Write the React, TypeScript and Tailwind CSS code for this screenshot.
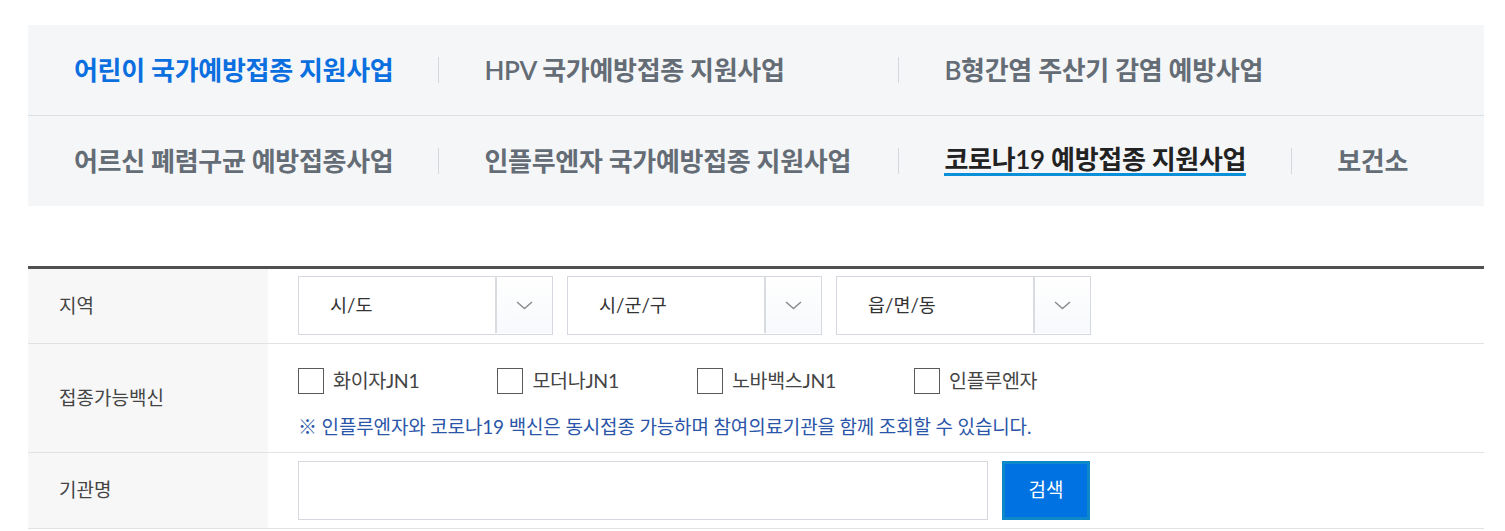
import { useState } from 'react';

const FONT = "font-['Lato','Noto_Sans_CJK_KR',sans-serif]";

function Sep() {
  return <span className="mx-[45px] inline-block h-[26px] w-px bg-[#d3d8de]" />;
}

function Chevron() {
  return (
    <svg width="17" height="9" viewBox="0 0 17 9" fill="none">
      <polyline points="1,1 8.5,7.5 16,1" stroke="#8c8c8c" strokeWidth="1.5" />
    </svg>
  );
}

function SelectBox({ label }: { label: string }) {
  return (
    <div className="flex h-[59px] w-[255px] border border-[#d5d8de] bg-white">
      <div className="flex flex-1 items-center pl-[31px] text-[18.5px] text-[#333]">{label}</div>
      <div className="mb-[1px] flex w-[57px] items-center justify-center border-l-2 border-[#d8dbe0] bg-gradient-to-b from-white to-[#f7f9fc]">
        <Chevron />
      </div>
    </div>
  );
}

function Check({ label }: { label: string }) {
  const [on, setOn] = useState(false);
  return (
    <label className="flex cursor-pointer items-center" onClick={() => setOn(!on)}>
      <span className="flex h-[26px] w-[26px] items-center justify-center border border-[#5a5a5a] bg-white text-[14px] text-[#0b6fe0]">
        {on ? '✓' : ''}
      </span>
      <span className="ml-[9px] text-[19.5px] tracking-[-0.3px] text-[#444]">{label}</span>
    </label>
  );
}

export default function App() {
  return (
    <div className={`${FONT} min-h-[531px] bg-white pt-[25px]`}>
      <div className="ml-[28px] w-[1456px]">
        {/* tab menu */}
        <nav className="bg-[#f5f6f8] text-[26px] font-semibold tracking-[-0.3px] text-[#646c75]">
          <div className="flex h-[91px] items-center border-b border-[#dcdfe3] pl-[46px]">
            <span className="text-[#0b6fe0]">어린이 국가예방접종 지원사업</span>
            <Sep />
            <span className="w-[369px]">HPV 국가예방접종 지원사업</span>
            <Sep />
            <span>B형간염 주산기 감염 예방사업</span>
          </div>
          <div className="flex h-[90px] items-center pl-[46px]">
            <span>어르신 폐렴구균 예방접종사업</span>
            <Sep />
            <span className="w-[369px]">인플루엔자 국가예방접종 지원사업</span>
            <Sep />
            <span className="inline-block border-b-[3px] border-[#0a8fd8] leading-[27px] text-[#222]">
              코로나19 예방접종 지원사업
            </span>
            <Sep />
            <span>보건소</span>
          </div>
        </nav>

        {/* search table */}
        <div className="mt-[60px] border-t-[3px] border-[#505050] text-[19px] text-[#444]">
          <div className="flex border-b border-[#e2e2e2]">
            <div className="flex w-[240px] items-center bg-[#f7f7f7] pl-[31px]">지역</div>
            <div className="flex gap-[14px] pb-[8px] pl-[30px] pt-[7px]">
              <SelectBox label="시/도" />
              <SelectBox label="시/군/구" />
              <SelectBox label="읍/면/동" />
            </div>
          </div>

          <div className="flex border-b border-[#e2e2e2]">
            <div className="flex w-[240px] items-center bg-[#f7f7f7] pl-[31px]">접종가능백신</div>
            <div className="pb-[12px] pl-[30px] pt-[20px]">
              <div className="flex h-[34px] items-center gap-[78px]">
                <Check label="화이자JN1" />
                <Check label="모더나JN1" />
                <Check label="노바백스JN1" />
                <Check label="인플루엔자" />
              </div>
              <p className="mt-[16px] leading-[26px] tracking-[-0.15px] text-[#2a55a8]">
                ※ 인플루엔자와 코로나19 백신은 동시접종 가능하며 참여의료기관을 함께 조회할 수 있습니다.
              </p>
            </div>
          </div>

          <div className="flex border-b border-[#e2e2e2]">
            <div className="flex w-[240px] items-center bg-[#f7f7f7] pl-[31px]">기관명</div>
            <div className="flex gap-[14px] py-[8px] pl-[30px]">
              <input
                type="text"
                className="h-[59px] w-[690px] border border-[#d5d8de] bg-white px-4 text-[18px] outline-none"
              />
              <button className="h-[59px] w-[88px] border-[3px] border-[#0d88c9] bg-[#0072e2] text-[19px] text-white">
                검색
              </button>
            </div>
          </div>
        </div>
      </div>
    </div>
  );
}
